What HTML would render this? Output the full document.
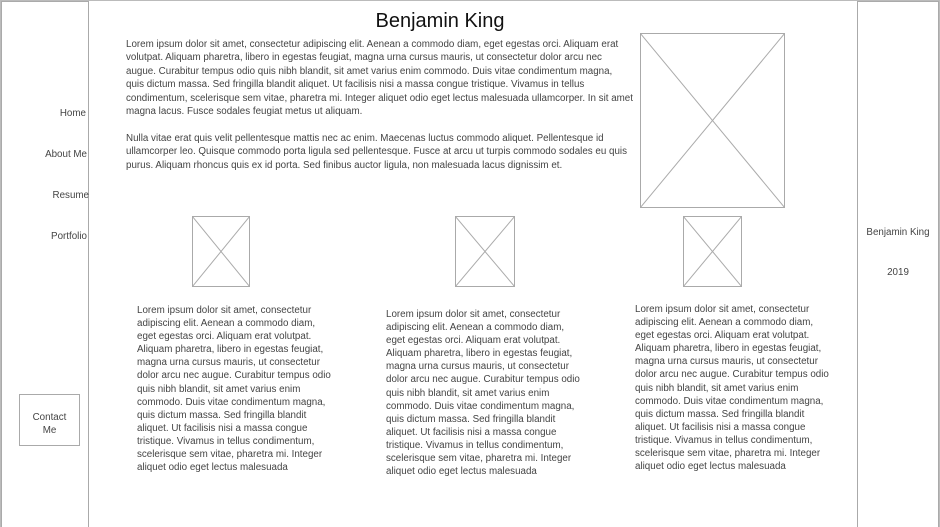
<!DOCTYPE html>
<html style="overflow:hidden;height:527px"><head><meta charset="utf-8"><style>
body{margin:0;width:940px;height:527px;position:relative;background:#fff;font-family:"Liberation Sans",sans-serif;color:#444;overflow:hidden}
.a{position:absolute}
.t{font-size:9.8px;white-space:nowrap}
.box{position:absolute;border:1px solid #aaa;box-sizing:border-box}
svg line{stroke:#aaa;stroke-width:1}
</style></head><body>
<div class="box" style="left:0;top:0;width:940px;height:527px;border-color:#bbb;border-bottom:none"></div>
<div class="box" style="left:1px;top:1px;width:88px;height:526px;border-bottom:none"></div>
<div class="box" style="left:857px;top:1px;width:82px;height:526px;border-bottom:none"></div>
<div class="a t" style="right:854px;top:108px">Home</div>
<div class="a t" style="right:853px;top:149px">About Me</div>
<div class="a t" style="right:851px;top:190px">Resume</div>
<div class="a t" style="right:853px;top:231px">Portfolio</div>
<div class="box" style="left:19px;top:394px;width:61px;height:52px;text-align:center;font-size:9.8px;line-height:13px;padding-top:16px">Contact<br>Me</div>
<div class="a t" style="left:857px;width:82px;text-align:center;top:227px">Benjamin King</div>
<div class="a t" style="left:857px;width:82px;text-align:center;top:267px">2019</div>
<div class="a" style="left:0;width:880px;text-align:center;top:10px;font-size:20px;color:#111">Benjamin King</div>
<div class="a t" style="left:126px;top:38px;line-height:13.4px">Lorem ipsum dolor sit amet, consectetur adipiscing elit. Aenean a commodo diam, eget egestas orci. Aliquam erat<br>volutpat. Aliquam pharetra, libero in egestas feugiat, magna urna cursus mauris, ut consectetur dolor arcu nec<br>augue. Curabitur tempus odio quis nibh blandit, sit amet varius enim commodo. Duis vitae condimentum magna,<br>quis dictum massa. Sed fringilla blandit aliquet. Ut facilisis nisi a massa congue tristique. Vivamus in tellus<br>condimentum, scelerisque sem vitae, pharetra mi. Integer aliquet odio eget lectus malesuada ullamcorper. In sit amet<br>magna lacus. Fusce sodales feugiat metus ut aliquam.<br><br>Nulla vitae erat quis velit pellentesque mattis nec ac enim. Maecenas luctus commodo aliquet. Pellentesque id<br>ullamcorper leo. Quisque commodo porta ligula sed pellentesque. Fusce at arcu ut turpis commodo sodales eu quis<br>purus. Aliquam rhoncus quis ex id porta. Sed finibus auctor ligula, non malesuada lacus dignissim et.</div>
<svg class="a" style="left:640px;top:33px" width="145" height="175"><rect x="0.5" y="0.5" width="144" height="174" fill="none" stroke="#aaa"/><line x1="0" y1="0" x2="145" y2="175"/><line x1="145" y1="0" x2="0" y2="175"/></svg>
<svg class="a" style="left:192px;top:216px" width="58" height="71"><rect x="0.5" y="0.5" width="57" height="70" fill="none" stroke="#aaa"/><line x1="0" y1="0" x2="58" y2="71"/><line x1="58" y1="0" x2="0" y2="71"/></svg>
<svg class="a" style="left:455px;top:216px" width="60" height="71"><rect x="0.5" y="0.5" width="59" height="70" fill="none" stroke="#aaa"/><line x1="0" y1="0" x2="60" y2="71"/><line x1="60" y1="0" x2="0" y2="71"/></svg>
<svg class="a" style="left:683px;top:216px" width="59" height="71"><rect x="0.5" y="0.5" width="58" height="70" fill="none" stroke="#aaa"/><line x1="0" y1="0" x2="59" y2="71"/><line x1="59" y1="0" x2="0" y2="71"/></svg>
<div class="a t" style="left:137px;top:304px;line-height:13.1px">Lorem ipsum dolor sit amet, consectetur<br>adipiscing elit. Aenean a commodo diam,<br>eget egestas orci. Aliquam erat volutpat.<br>Aliquam pharetra, libero in egestas feugiat,<br>magna urna cursus mauris, ut consectetur<br>dolor arcu nec augue. Curabitur tempus odio<br>quis nibh blandit, sit amet varius enim<br>commodo. Duis vitae condimentum magna,<br>quis dictum massa. Sed fringilla blandit<br>aliquet. Ut facilisis nisi a massa congue<br>tristique. Vivamus in tellus condimentum,<br>scelerisque sem vitae, pharetra mi. Integer<br>aliquet odio eget lectus malesuada</div>
<div class="a t" style="left:386px;top:308px;line-height:13.1px">Lorem ipsum dolor sit amet, consectetur<br>adipiscing elit. Aenean a commodo diam,<br>eget egestas orci. Aliquam erat volutpat.<br>Aliquam pharetra, libero in egestas feugiat,<br>magna urna cursus mauris, ut consectetur<br>dolor arcu nec augue. Curabitur tempus odio<br>quis nibh blandit, sit amet varius enim<br>commodo. Duis vitae condimentum magna,<br>quis dictum massa. Sed fringilla blandit<br>aliquet. Ut facilisis nisi a massa congue<br>tristique. Vivamus in tellus condimentum,<br>scelerisque sem vitae, pharetra mi. Integer<br>aliquet odio eget lectus malesuada</div>
<div class="a t" style="left:635px;top:303px;line-height:13.1px">Lorem ipsum dolor sit amet, consectetur<br>adipiscing elit. Aenean a commodo diam,<br>eget egestas orci. Aliquam erat volutpat.<br>Aliquam pharetra, libero in egestas feugiat,<br>magna urna cursus mauris, ut consectetur<br>dolor arcu nec augue. Curabitur tempus odio<br>quis nibh blandit, sit amet varius enim<br>commodo. Duis vitae condimentum magna,<br>quis dictum massa. Sed fringilla blandit<br>aliquet. Ut facilisis nisi a massa congue<br>tristique. Vivamus in tellus condimentum,<br>scelerisque sem vitae, pharetra mi. Integer<br>aliquet odio eget lectus malesuada</div>
</body></html>
